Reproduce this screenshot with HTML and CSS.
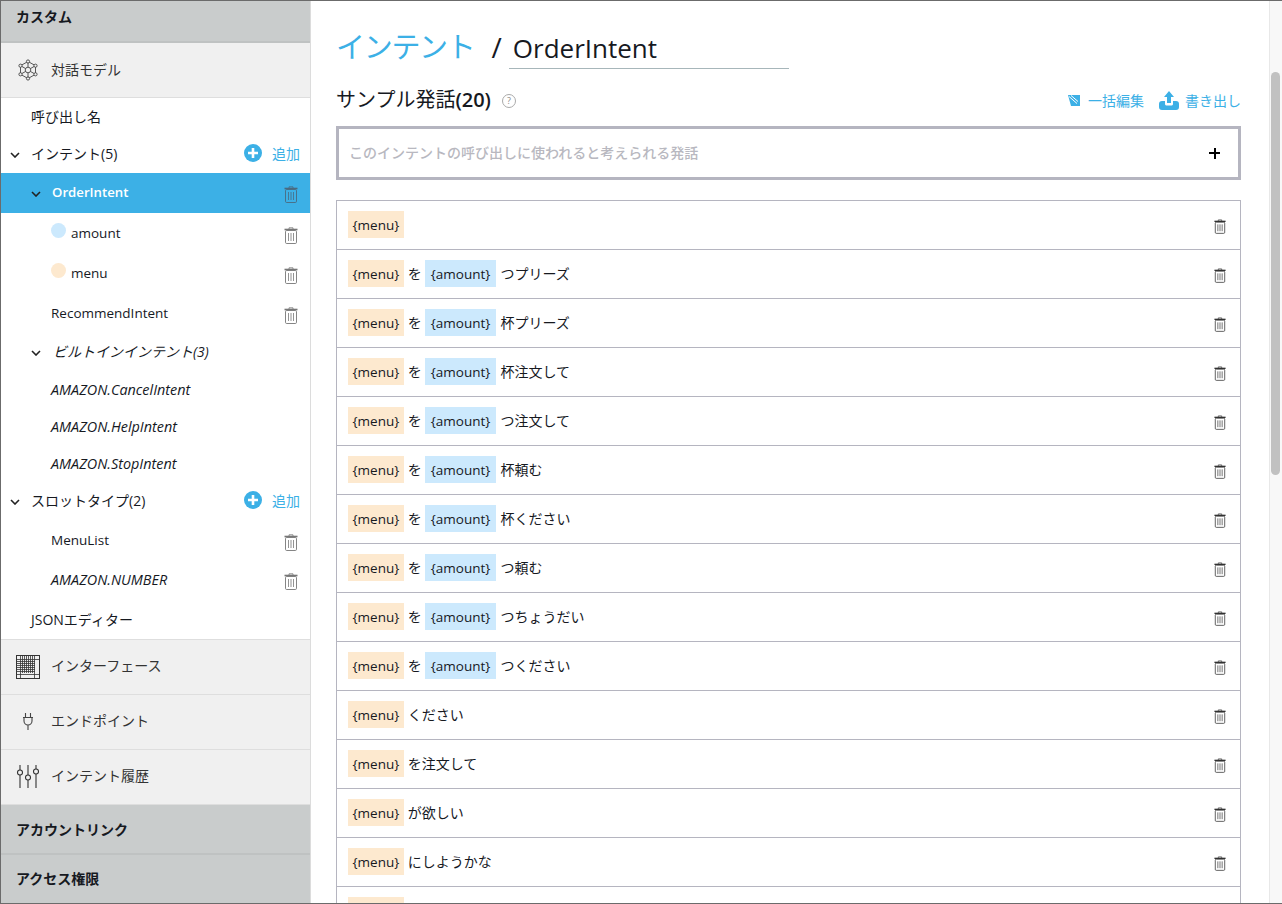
FILE: index.html
```html
<!DOCTYPE html>
<html lang="ja">
<head>
    <meta charset="UTF-8">
    <title>OrderIntent</title>
    <link rel="stylesheet" href="styles.css">
</head>
<body>
    <svg class="defs" width="0" height="0">
        <symbol id="trash" viewBox="0 0 14 17">
            <path d="M5 2V.8h4V2" fill="none" stroke="currentColor" stroke-width=".8"/>
            <path d="M.5 2.500h13" stroke="currentColor" stroke-width="1.600"/>
            <rect x="1.500" y="3.500" width="11" height="13" rx="1.200" fill="none" stroke="currentColor" stroke-width=".9"/>
            <path d="M4.500 6v8M7 6v8M9.500 6v8" stroke="currentColor" stroke-width=".8"/>
        </symbol>
        <symbol id="chev" viewBox="0 0 10 6">
            <path d="M1 1l4 4 4-4" fill="none" stroke="currentColor" stroke-width="1.600"/>
        </symbol>
        <symbol id="plus" viewBox="0 0 18 18">
            <circle cx="9" cy="9" r="9" fill="#3cb0e6"/>
            <path d="M9 4v10M4 9h10" stroke="#fff" stroke-width="2.600"/>
        </symbol>
    </svg>

    <div class="window">
        <nav class="sidebar">
            <div class="section">カスタム</div>
            <div class="tool model">
                <span class="tool-icon">
                    <svg width="22" height="22" viewBox="0 0 22 22" fill="none" stroke="#444" stroke-width="0.9">
                        <path d="M11 2.500l7.500 4.200v8.600L11 19.500l-7.500-4.200V6.700z"/>
                        <path d="M11 2.500V8M11 14v5.500M3.500 6.700l5 2.800M13.500 12.500l5 2.800M18.500 6.700l-5 2.800M8.500 12.500l-5 2.800"/>
                        <circle cx="11" cy="11" r="2.800"/>
                        <circle cx="11" cy="2.500" r="1.600" fill="#f0f0f0"/>
                        <circle cx="11" cy="19.500" r="1.600" fill="#f0f0f0"/>
                        <circle cx="3.500" cy="6.700" r="1.600" fill="#f0f0f0"/>
                        <circle cx="18.500" cy="6.700" r="1.600" fill="#f0f0f0"/>
                        <circle cx="3.500" cy="15.300" r="1.600" fill="#f0f0f0"/>
                        <circle cx="18.500" cy="15.300" r="1.600" fill="#f0f0f0"/>
                    </svg>
                </span>
                対話モデル
            </div>

            <ul class="tree">
                <li class="node lv0 h37 ja">呼び出し名</li>
                <li class="node lv0 h38 ja">
                    <svg class="chev"><use href="#chev"/></svg>インテント(5)
                    <span class="add"><svg class="add-icon"><use href="#plus"/></svg>追加</span>
                </li>
                <li class="node lv1 h40 active">
                    <svg class="chev"><use href="#chev"/></svg>OrderIntent
                    <svg class="trash"><use href="#trash"/></svg>
                </li>
                <li class="node lv2 h40"><i class="dot blue"></i>amount<svg class="trash"><use href="#trash"/></svg></li>
                <li class="node lv2 h40"><i class="dot peach"></i>menu<svg class="trash"><use href="#trash"/></svg></li>
                <li class="node lv2 h40">RecommendIntent<svg class="trash"><use href="#trash"/></svg></li>
                <li class="node lv1 h38 em ja"><svg class="chev"><use href="#chev"/></svg>ビルトインインテント(3)</li>
                <li class="node lv2 h37 em">AMAZON.CancelIntent</li>
                <li class="node lv2 h37 em">AMAZON.HelpIntent</li>
                <li class="node lv2 h37 em">AMAZON.StopIntent</li>
                <li class="node lv0 h38 ja">
                    <svg class="chev"><use href="#chev"/></svg>スロットタイプ(2)
                    <span class="add"><svg class="add-icon"><use href="#plus"/></svg>追加</span>
                </li>
                <li class="node lv2 h40">MenuList<svg class="trash"><use href="#trash"/></svg></li>
                <li class="node lv2 h40 em up">AMAZON.NUMBER<svg class="trash"><use href="#trash"/></svg></li>
                <li class="node lv0 h39 ja">JSONエディター</li>
            </ul>

            <div class="tool top-line">
                <span class="tool-icon">
                    <svg width="24" height="24" viewBox="0 0 24 24" fill="none" stroke="#333">
                        <rect x="0.500" y="0.500" width="23" height="23"/>
                        <path d="M4.500 1v22M6.500 1v17M8.500 1v17M10.500 1v17M12.500 1v17M14.500 1v17M16.500 1v17M18.500 1v22M1 4.500h22M1 6.500h18M1 8.500h18M1 10.500h18M1 12.500h18M1 14.500h18M1 16.500h18M1 19.500h22" stroke-width="0.800"/>
                    </svg>
                </span>
                インターフェース
            </div>
            <div class="tool">
                <span class="tool-icon">
                    <svg width="12" height="18" viewBox="0 0 12 18" fill="none" stroke="#444" stroke-width="1.100">
                        <path d="M3.500 0v4M8.500 0v4M1 4.500h10M2 4.500v3.500c0 2.500 2 4 4 4s4-1.500 4-4V4.500M6 12v5"/>
                    </svg>
                </span>
                エンドポイント
            </div>
            <div class="tool">
                <span class="tool-icon">
                    <svg width="24" height="23" viewBox="0 0 24 23" fill="none" stroke="#333" stroke-width="1.100">
                        <path d="M4 0v5M4 10v13M12 0v10M12 15v8M20 0v4M20 9v14"/>
                        <circle cx="4" cy="7.500" r="2.500"/>
                        <circle cx="12" cy="12.500" r="2.500"/>
                        <circle cx="20" cy="6.500" r="2.500"/>
                    </svg>
                </span>
                インテント履歴
            </div>
            <div class="section top-line-dark">アカウントリンク</div>
            <div class="section top-line-dark last">アクセス権限</div>
        </nav>

        <main class="content">
            <h1 class="title">
                <a class="crumb">インテント</a>
                <span class="slash">/</span>
                <span class="intent-name">OrderIntent</span>
            </h1>

            <div class="sample-head">
                <h2>サンプル発話<span class="count">(20)</span></h2>
                <span class="help">?</span>
                <div class="actions">
                    <span class="action bulk">
                        <svg width="14" height="13" viewBox="0 0 14 13">
                            <path d="M1 1h12v11H4z" fill="#3cb0e6"/>
                            <path d="M2 2.500l8 7M4 1.500l7 6" stroke="#fff"/>
                        </svg>
                        一括編集
                    </span>
                    <span class="action">
                        <svg width="20" height="19" viewBox="0 0 20 19" fill="#3cb0e6">
                            <path d="M10 0l5 6h-3v6H8V6H5z"/>
                            <path d="M0 13c0-2 1-3 3-3h3v3c0 1 1 1.500 2 1.500h4c1 0 2-.5 2-1.500v-3h3c2 0 3 1 3 3v3c0 2-1 3-3 3H3c-2 0-3-1-3-3z"/>
                        </svg>
                        書き出し
                    </span>
                </div>
            </div>

            <div class="utter-input">
                <span class="placeholder">このインテントの呼び出しに使われると考えられる発話</span>
                <b class="cross"></b>
            </div>

            <ul class="utterances">
                <li><em class="slot menu">{menu}</em><svg class="trash"><use href="#trash"/></svg></li>
                <li><em class="slot menu">{menu}</em>を<em class="slot amount">{amount}</em>つプリーズ<svg class="trash"><use href="#trash"/></svg></li>
                <li><em class="slot menu">{menu}</em>を<em class="slot amount">{amount}</em>杯プリーズ<svg class="trash"><use href="#trash"/></svg></li>
                <li><em class="slot menu">{menu}</em>を<em class="slot amount">{amount}</em>杯注文して<svg class="trash"><use href="#trash"/></svg></li>
                <li><em class="slot menu">{menu}</em>を<em class="slot amount">{amount}</em>つ注文して<svg class="trash"><use href="#trash"/></svg></li>
                <li><em class="slot menu">{menu}</em>を<em class="slot amount">{amount}</em>杯頼む<svg class="trash"><use href="#trash"/></svg></li>
                <li><em class="slot menu">{menu}</em>を<em class="slot amount">{amount}</em>杯ください<svg class="trash"><use href="#trash"/></svg></li>
                <li><em class="slot menu">{menu}</em>を<em class="slot amount">{amount}</em>つ頼む<svg class="trash"><use href="#trash"/></svg></li>
                <li><em class="slot menu">{menu}</em>を<em class="slot amount">{amount}</em>つちょうだい<svg class="trash"><use href="#trash"/></svg></li>
                <li><em class="slot menu">{menu}</em>を<em class="slot amount">{amount}</em>つください<svg class="trash"><use href="#trash"/></svg></li>
                <li><em class="slot menu">{menu}</em>ください<svg class="trash"><use href="#trash"/></svg></li>
                <li><em class="slot menu">{menu}</em>を注文して<svg class="trash"><use href="#trash"/></svg></li>
                <li><em class="slot menu">{menu}</em>が欲しい<svg class="trash"><use href="#trash"/></svg></li>
                <li><em class="slot menu">{menu}</em>にしようかな<svg class="trash"><use href="#trash"/></svg></li>
                <li><em class="slot menu">{menu}</em></li>
            </ul>
        </main>

        <div class="scrollbar"><div class="thumb"></div></div>
    </div>
</body>
</html>
```

FILE: styles.css
```css
* { box-sizing: border-box; }
html, body { margin: 0; height: 100%; overflow: hidden; }
body { font-family: "Open Sans", "Noto Sans CJK JP", sans-serif; font-size: 13.500px; color: #16191f; background: #fff; }
.defs { position: absolute; }

.window {
    display: flex;
    height: 904px;
    border: 1px solid #6b6b6b;
    border-right: none;
    overflow: hidden;
}

/* left column */
.sidebar { width: 310px; flex: none; border-right: 1px solid #dcdcdc; display: flex; flex-direction: column; }
.section {
    background: #c9cccc;
    border-bottom: 2px solid #bfc2c2;
    font-weight: 700;
    font-size: 14px;
    height: 42px;
    padding: 0 15px 11px;
    display: flex;
    align-items: center;
    flex: none;
}
.top-line-dark { height: 50px; padding-bottom: 0; }
.last { height: 49px; border-bottom: none; padding-bottom: 4px; }
.tool {
    background: #f0f0f0;
    border-bottom: 1px solid #dedede;
    height: 55px;
    padding: 0 0 5px 15px;
    display: flex;
    align-items: center;
    color: #333;
    font-size: 14px;
    flex: none;
}
.tool.model { padding-bottom: 3px; }
.top-line { border-top: 1px solid #dedede; height: 56px; }
.tool-icon { width: 35px; display: flex; justify-content: center; padding-right: 11px; flex: none; margin-top: 4px; }
.model .tool-icon { margin-top: 2px; }

.tree { list-style: none; margin: 0; padding: 0; }
.node { display: flex; align-items: center; position: relative; }
.ja { font-size: 14px; padding-bottom: 2px; }
.h37 { height: 37px; }
.h38 { height: 38px; }
.h39 { height: 39px; }
.h40 { height: 40px; }
.lv0 { padding-left: 30px; }
.lv1 { padding-left: 51px; }
.lv2 { padding-left: 50px; }
.em { font-style: italic; font-size: 14.400px; }
.up { padding-bottom: 2px; }
.active { background: #3cb0e6; color: #fff; font-weight: 600; font-size: 13.200px; padding-bottom: 2px; }
.active .trash { color: #4a6a80; }

.chev { position: absolute; width: 10px; height: 6px; color: #222; top: 50%; margin-top: -2px; }
.lv0 .chev { left: 9px; }
.lv1 .chev { left: 30px; }
.lv1.em { padding-left: 52px; font-size: 14px; }

.dot { width: 15px; height: 15px; border-radius: 50%; margin-right: 5px; margin-top: -5px; }
.dot.blue { background: #cce9fd; }
.dot.peach { background: #fde9cf; }

.add { margin-left: auto; margin-right: 10px; color: #3cb0e6; display: flex; align-items: center; gap: 10px; }
.add-icon { width: 18px; height: 18px; }

.trash { width: 14px; height: 17px; color: #777; margin-left: auto; margin-right: 12px; margin-top: 4px; flex: none; }

/* main column */
.content { flex: 1; min-width: 0; padding: 0 28px 0 25px; font-size: 14px; }
.title { margin: 0; height: 67px; padding-top: 26px; display: flex; align-items: baseline; font-weight: 400; font-size: 26px; line-height: 40px; }
.crumb { color: #3cb0e6; font-size: 29px; letter-spacing: -1.300px; }
.slash { margin-left: 17px; font-size: 28px; }
.intent-name { margin-left: 7px; padding-left: 4px; width: 280px; height: 41px; border-bottom: 1px solid #a7b6ba; }

.sample-head { display: flex; align-items: center; height: 30px; margin-top: 17px; }
.sample-head h2 { margin: 0; font-size: 20px; font-weight: 400; line-height: 30px; }
.count { font-weight: 600; }
.help { width: 14px; height: 14px; border: 1px solid #aaa; border-radius: 50%; color: #888; font-size: 9px; line-height: 12px; text-align: center; margin-left: 11px; margin-top: 2px; }
.actions { margin-left: auto; display: flex; gap: 15px; color: #3cb0e6; font-size: 14px; }
.action { display: flex; align-items: center; gap: 6px; }
.action.bulk { gap: 7px; }

.utter-input {
    margin-top: 11px;
    height: 54px;
    border: 3px solid #b5b5c0;
    display: flex;
    align-items: center;
    justify-content: space-between;
    padding: 0 18px 0 10px;
    color: #b8b8c0;
    font-weight: 500;
    font-size: 14px;
}
.placeholder { margin-bottom: 2px; }
.cross { width: 11px; height: 11px; background: linear-gradient(#000, #000) center / 100% 2px no-repeat, linear-gradient(#000, #000) center / 2px 100% no-repeat; }

.utterances { list-style: none; margin: 20px 0 0; padding: 0; border: 1px solid #b5b5c0; border-bottom: none; }
.utterances li { height: 49px; display: flex; align-items: center; padding: 0 0 2px 11px; border-bottom: 1px solid #b5b5c0; }
.utterances .trash { color: #333; width: 12px; height: 15px; margin-right: 14px; margin-top: 4px; }
.slot { font-style: normal; font-size: 13.500px; height: 27px; line-height: 28px; padding: 0 4.500px; margin-top: 1px; }
.slot.menu { background: #fde9cf; margin-right: 4px; }
.slot.amount { background: #cce9fd; padding: 0 6px; margin-left: 3px; margin-right: 4px; }

.scrollbar { width: 13px; flex: none; background: #f8f8f8; border-left: 1px solid #e8e8e8; padding: 71px 2px 0 1px; }
.thumb { height: 403px; background: #c1c1c1; border-radius: 5px; }
```
